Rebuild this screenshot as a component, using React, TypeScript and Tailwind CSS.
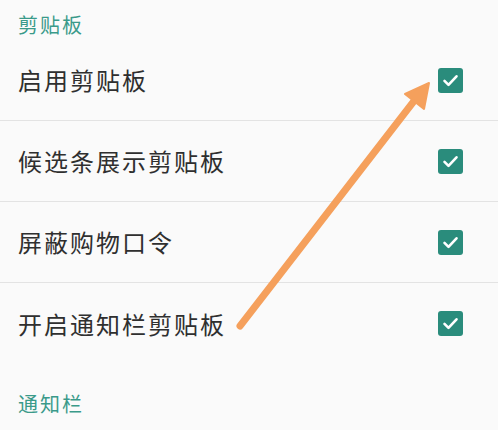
import React from 'react';

const rows = ['启用剪贴板', '候选条展示剪贴板', '屏蔽购物口令', '开启通知栏剪贴板'];

function CheckBox() {
    return (
        <div className="w-[25px] h-[25px] rounded-[3px] bg-[#2a8c7c] flex items-center justify-center">
            <svg width="25" height="25" viewBox="0 0 25 25" fill="none">
                <path d="M6.5 12.8l4 4 8-8.5" stroke="#fff" strokeWidth="2.6" strokeLinecap="round" strokeLinejoin="round" />
            </svg>
        </div>
    );
}

export default function App() {
    return (
        <div
            className="relative w-[498px] h-[430px] overflow-hidden bg-[#fafafa]"
            style={{ fontFamily: '"Noto Sans CJK SC", "Noto Sans", sans-serif' }}
        >
            {/* 剪贴板 section */}
            <div className="h-[40px] pt-[14px] pl-[18px] text-[20px] leading-[22px] tracking-[2px] text-[#3a9a8a]">剪贴板</div>
            {rows.map((label, i) => (
                <div
                    key={label}
                    className={`h-[81px] flex items-center justify-between pl-[18px] pr-[35px] ${i < rows.length - 1 ? 'border-b border-[#e3e3e3]' : ''}`}
                >
                    <span className="text-[24px] leading-[28px] tracking-[2px] text-[#2f2f2f]">{label}</span>
                    <CheckBox />
                </div>
            ))}
            {/* 通知栏 section */}
            <div className="pt-[29px] pl-[18px] text-[20px] leading-[22px] tracking-[2px] text-[#3a9a8a]">通知栏</div>

            {/* annotation arrow */}
            <svg className="absolute left-0 top-0 pointer-events-none" width="498" height="430">
                <line x1="240" y1="326" x2="414" y2="101" stroke="#f5a05c" strokeWidth="7" strokeLinecap="round" />
                <polygon points="429,83 405,94 424,109" fill="#f5a05c" stroke="#f5a05c" strokeWidth="2" strokeLinejoin="round" />
            </svg>
        </div>
    );
}
